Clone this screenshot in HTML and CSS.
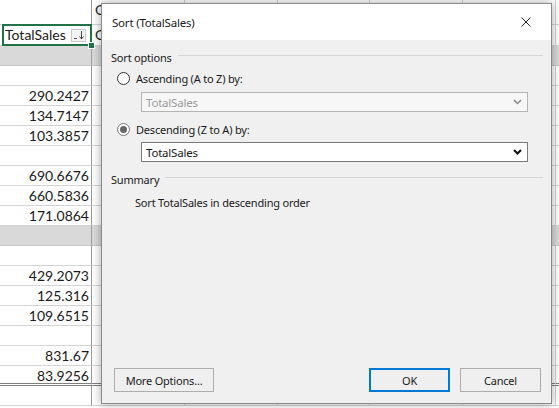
FILE: index.html
```html
<!DOCTYPE html>
<html lang="en">
<head>
<meta charset="UTF-8">
<title>Sort (TotalSales)</title>
<link rel="stylesheet" href="styles.css">
</head>
<body>
<div class="sheet">
 <div class="row r1"><div class="c a"></div><div class="c">O</div><div class="c"></div><div class="c"></div><div class="c"></div><div class="c"></div><div class="c"></div></div>
 <div class="row r2"><div class="c a head">TotalSales
   <span class="fbtn"><svg width="13" height="11" viewBox="0 0 13 11"><path d="M2 8.5h3" stroke="#555" stroke-width="1"/><path d="M9.5 1v8M7.5 6.5l2 2.5 2-2.5" stroke="#444" stroke-width="1" fill="none"/></svg></span>
 </div><div class="c">O</div><div class="c"></div><div class="c"></div><div class="c"></div><div class="c"></div><div class="c"></div></div>
 <div class="row band"><div class="c a"></div><div class="c"></div><div class="c"></div><div class="c"></div><div class="c"></div><div class="c"></div><div class="c"></div></div>
 <div class="row"><div class="c a"></div><div class="c"></div><div class="c"></div><div class="c"></div><div class="c"></div><div class="c"></div><div class="c"></div></div>
 <div class="row"><div class="c a">290.2427</div><div class="c"></div><div class="c"></div><div class="c"></div><div class="c"></div><div class="c"></div><div class="c"></div></div>
 <div class="row"><div class="c a">134.7147</div><div class="c"></div><div class="c"></div><div class="c"></div><div class="c"></div><div class="c"></div><div class="c"></div></div>
 <div class="row"><div class="c a">103.3857</div><div class="c"></div><div class="c"></div><div class="c"></div><div class="c"></div><div class="c"></div><div class="c"></div></div>
 <div class="row"><div class="c a"></div><div class="c"></div><div class="c"></div><div class="c"></div><div class="c"></div><div class="c"></div><div class="c"></div></div>
 <div class="row"><div class="c a">690.6676</div><div class="c"></div><div class="c"></div><div class="c"></div><div class="c"></div><div class="c"></div><div class="c"></div></div>
 <div class="row"><div class="c a">660.5836</div><div class="c"></div><div class="c"></div><div class="c"></div><div class="c"></div><div class="c"></div><div class="c"></div></div>
 <div class="row"><div class="c a">171.0864</div><div class="c"></div><div class="c"></div><div class="c"></div><div class="c"></div><div class="c"></div><div class="c"></div></div>
 <div class="row band"><div class="c a"></div><div class="c"></div><div class="c"></div><div class="c"></div><div class="c"></div><div class="c"></div><div class="c"></div></div>
 <div class="row"><div class="c a"></div><div class="c"></div><div class="c"></div><div class="c"></div><div class="c"></div><div class="c"></div><div class="c"></div></div>
 <div class="row"><div class="c a">429.2073</div><div class="c"></div><div class="c"></div><div class="c"></div><div class="c"></div><div class="c"></div><div class="c"></div></div>
 <div class="row"><div class="c a">125.316</div><div class="c"></div><div class="c"></div><div class="c"></div><div class="c"></div><div class="c"></div><div class="c"></div></div>
 <div class="row"><div class="c a">109.6515</div><div class="c"></div><div class="c"></div><div class="c"></div><div class="c"></div><div class="c"></div><div class="c"></div></div>
 <div class="row"><div class="c a"></div><div class="c"></div><div class="c"></div><div class="c"></div><div class="c"></div><div class="c"></div><div class="c"></div></div>
 <div class="row"><div class="c a">831.67</div><div class="c"></div><div class="c"></div><div class="c"></div><div class="c"></div><div class="c"></div><div class="c"></div></div>
 <div class="row total"><div class="c a">83.9256</div><div class="c"></div><div class="c"></div><div class="c"></div><div class="c"></div><div class="c"></div><div class="c"></div></div>
 <div class="row"><div class="c a"></div><div class="c"></div><div class="c"></div><div class="c"></div><div class="c"></div><div class="c"></div><div class="c"></div></div>
</div>

<div class="dialog">
 <div class="titlebar">
  <span>Sort (TotalSales)</span>
  <svg class="close" width="10" height="10" viewBox="0 0 10 10"><path d="M0.5 0.5l9 9M9.5 0.5l-9 9" stroke="#222" stroke-width="1"/></svg>
 </div>
 <div class="body">
  <div class="legend first">Sort options</div>
  <div class="radio-row r-asc"><span class="radio"></span>Ascending (A to Z) by:</div>
  <div class="select disabled">TotalSales
   <svg width="9" height="6" viewBox="0 0 9 6"><path d="M1 1l3.5 3.5L8 1" stroke="#8a8a8a" stroke-width="1.5" fill="none"/></svg>
  </div>
  <div class="radio-row r-desc"><span class="radio on"></span>Descending (Z to A) by:</div>
  <div class="select">TotalSales
   <svg width="9" height="6" viewBox="0 0 9 6"><path d="M1 1l3.5 3.5L8 1" stroke="#111" stroke-width="2" fill="none"/></svg>
  </div>
  <div class="legend">Summary</div>
  <div class="summary">Sort TotalSales in descending order</div>
  <div class="buttons">
   <button class="btn more">More Options...</button>
   <span class="spacer"></span>
   <button class="btn ok">OK</button>
   <button class="btn">Cancel</button>
  </div>
 </div>
</div>
</body>
</html>
```
FILE: styles.css
```css
body { margin:0; background:#fff; overflow:hidden; }
.sheet { font-family:'Lato', 'Liberation Sans', sans-serif; font-size:14px; color:#1a1a1a; }
.row { display:grid; grid-template-columns:92px 93px 93px 92px 93px 93px 1fr; height:20px; }
.r1 { height:25px; }
.r2 { height:21px; }
.c { box-sizing:border-box; border-right:1px solid #d4d4d4; border-bottom:1px solid #d4d4d4; line-height:19px; padding:0 3px; white-space:nowrap; overflow:hidden; }
.c.a { border-right-color:#9c9c9c; text-align:right; padding-right:2px; }
.band .c { background:#d9d9d9; border-bottom-color:#c6c6c6; }
.total .c { border-bottom:3px double #7f7f7f; }
.c.head { position:relative; overflow:visible; text-align:left; padding-left:5px; line-height:20px; }
.head::before { content:""; position:absolute; left:2px; top:-1px; right:-1px; bottom:-1px; border:2px solid #217346; }
.head::after { content:""; position:absolute; right:-4px; bottom:-4px; width:5px; height:5px; background:#217346; border:1px solid #fff; }
.fbtn { position:absolute; left:71px; top:4px; width:15px; height:13px; box-sizing:border-box; border:1px solid #c9c9c9; background:#f3f3f3; display:flex; align-items:center; justify-content:center; }

.dialog { position:absolute; left:101px; top:3px; width:451px; height:401px; box-sizing:border-box; border:1px solid #8a8a8a; background:#f0f0f0; display:flex; flex-direction:column; box-shadow:0 0 9px rgba(0,0,0,.35); font-family:'Noto Sans', sans-serif; font-size:11px; letter-spacing:-0.2px; color:#1a1a1a; }
.titlebar { height:36px; background:#fff; display:flex; align-items:center; justify-content:space-between; padding:0 20px 0 10px; font-size:11.5px; }
.body { flex:1; display:flex; flex-direction:column; padding:9px 8px 11px 9px; }
.legend { display:flex; align-items:center; height:16px; margin-top:9px; }
.legend.first { margin-top:0; }
.legend::after { content:""; flex:1; height:1px; background:#d6d6d6; margin-left:6px; position:relative; top:-2px; }
.radio-row { display:flex; align-items:center; height:16px; margin-left:6px; }
.r-asc { margin-top:5px; }
.r-desc { margin-top:9px; }
.radio { width:13px; height:13px; box-sizing:border-box; border:1px solid #333; border-radius:50%; background:#fff; margin-right:6px; display:flex; align-items:center; justify-content:center; }
.radio.on { border-color:#777; }
.radio.on::after { content:""; width:7px; height:7px; border-radius:50%; background:#666; }
.select { margin:6px 0 0 30px; width:387px; height:20px; box-sizing:border-box; border:1px solid #7a7a7a; background:#fff; display:flex; align-items:center; justify-content:space-between; padding:0 5px 0 4px; font-size:11.5px; }
.select.disabled { border-color:#b4b4b4; background:#f7f7f7; color:#9a9a9a; }
.r-desc + .select { margin-top:5px; }
.summary { margin:8px 0 0 24px; height:16px; line-height:16px; }
.buttons { margin-top:auto; display:flex; padding:0 2px 0 3px; }
.spacer { flex:1; }
.btn { font:inherit; letter-spacing:inherit; color:#1a1a1a; height:24px; width:81px; box-sizing:border-box; border:1px solid #adadad; background:#efefef; padding:0; margin-left:10px; }
.btn.more { width:100px; margin-left:0; }
.btn.ok { border:2px solid #0078d7; margin-left:0; }
```
